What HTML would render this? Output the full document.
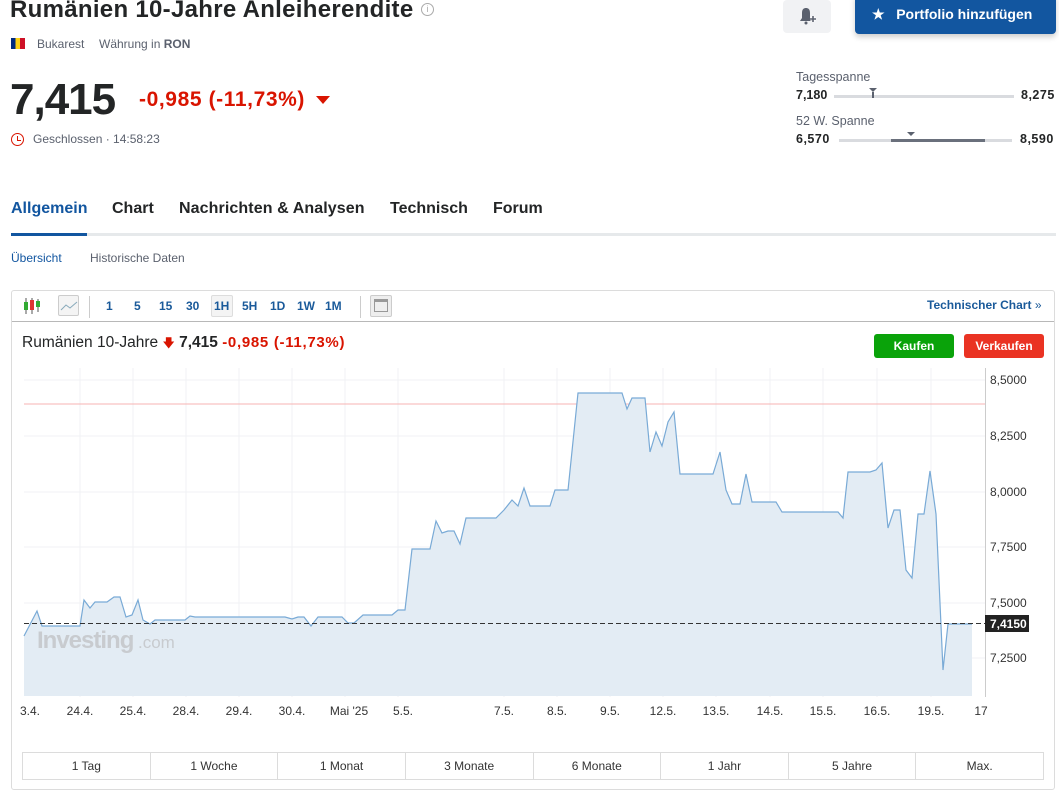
<!DOCTYPE html>
<html><head><meta charset="utf-8"><style>
*{margin:0;padding:0;box-sizing:border-box}
body{width:1059px;height:797px;overflow:hidden;background:#fff;font-family:"Liberation Sans",Arial,sans-serif;color:#232526;position:relative}
.a{position:absolute;white-space:nowrap}
</style></head><body>
<div class="a" style="left:10px;top:-4px;font-size:24px;font-weight:bold;color:#232526;letter-spacing:0.3px">Rumänien 10-Jahre Anleiherendite</div>
<div class="a" style="left:421px;top:3px;width:13px;height:13px;border:1px solid #aaa;border-radius:50%;font-size:9px;color:#aaa;text-align:center;line-height:11px">i</div>
<div class="a" style="left:11px;top:38px;width:14px;height:11px;background:linear-gradient(90deg,#002b7f 33%,#fcd116 33%,#fcd116 66%,#ce1126 66%)"></div>
<div class="a" style="left:37px;top:37px;font-size:12px;color:#5b616e">Bukarest</div>
<div class="a" style="left:99px;top:37px;font-size:12px;color:#5b616e">Währung in <b>RON</b></div>
<div class="a" style="left:10px;top:75px;font-size:44px;font-weight:bold;color:#232526;letter-spacing:-1px">7,415</div>
<div class="a" style="left:139px;top:88px;font-size:21px;font-weight:bold;color:#d91400;letter-spacing:0.6px">-0,985 (-11,73%)</div>
<div class="a" style="left:316px;top:96px;width:0;height:0;border-left:7px solid transparent;border-right:7px solid transparent;border-top:8px solid #d91400"></div>
<div class="a" style="left:11px;top:133px;width:13px;height:13px;border:1.5px solid #d91400;border-radius:50%"></div>
<div class="a" style="left:16.5px;top:136px;width:1.5px;height:4px;background:#d91400"></div>
<div class="a" style="left:16.5px;top:139.5px;width:4px;height:1.5px;background:#d91400"></div>
<div class="a" style="left:33px;top:132px;font-size:12px;color:#5b616e">Geschlossen · 14:58:23</div>

<div class="a" style="left:783px;top:0;width:48px;height:33px;background:#f1f2f4;border-radius:4px"></div>
<svg class="a" style="left:797px;top:5px" width="20" height="20"><path d="M3 16 L5 13 L5 8 C5 4 7 3 9 3 C11 3 13 4 13 8 L13 13 L15 16 Z" fill="#5b616e"/><circle cx="9" cy="18" r="1.5" fill="#5b616e"/><path d="M13 14 H19 M16 11 V17" stroke="#fff" stroke-width="3"/><path d="M13 14 H19 M16 11 V17" stroke="#5b616e" stroke-width="1.6"/></svg>
<div class="a" style="left:855px;top:-6px;width:201px;height:40px;background:#1256a0;border-radius:4px;box-shadow:0 3px 6px rgba(0,0,0,.2);color:#fff;font-weight:bold;font-size:14px;line-height:40px;padding-left:17px">★&nbsp;&nbsp;&nbsp;Portfolio hinzufügen</div>

<div class="a" style="left:796px;top:70px;font-size:12.5px;color:#5b616e">Tagesspanne</div>
<div class="a" style="left:796px;top:88px;font-size:12.5px;font-weight:bold">7,180</div>
<div class="a" style="left:834px;top:95px;width:180px;height:3px;background:#d9dbdf"></div>
<div class="a" style="left:872px;top:92px;width:2px;height:6px;background:#5b616e"></div>
<div class="a" style="left:869px;top:88px;border-left:4px solid transparent;border-right:4px solid transparent;border-top:4px solid #5b616e"></div>
<div class="a" style="left:1021px;top:88px;font-size:12.5px;font-weight:bold;letter-spacing:0.5px">8,275</div>
<div class="a" style="left:796px;top:114px;font-size:12.5px;color:#5b616e">52 W. Spanne</div>
<div class="a" style="left:796px;top:132px;font-size:12.5px;font-weight:bold;letter-spacing:0.5px">6,570</div>
<div class="a" style="left:839px;top:139px;width:173px;height:3px;background:#d9dbdf"></div>
<div class="a" style="left:891px;top:139px;width:94px;height:3px;background:#6a707c"></div>
<div class="a" style="left:907px;top:132px;border-left:4px solid transparent;border-right:4px solid transparent;border-top:4px solid #5b616e"></div>
<div class="a" style="left:1020px;top:132px;font-size:12.5px;font-weight:bold;letter-spacing:0.5px">8,590</div>

<div class="a" style="left:11px;top:200px;font-size:16px;font-weight:bold;color:#1256a0">Allgemein</div>
<div class="a" style="left:112px;top:200px;font-size:16px;font-weight:bold">Chart</div>
<div class="a" style="left:179px;top:200px;font-size:16px;font-weight:bold;letter-spacing:0.1px">Nachrichten &amp; Analysen</div>
<div class="a" style="left:390px;top:200px;font-size:16px;font-weight:bold">Technisch</div>
<div class="a" style="left:493px;top:200px;font-size:16px;font-weight:bold">Forum</div>
<div class="a" style="left:11px;top:233px;width:1045px;height:3px;background:#e6e9eb"></div>
<div class="a" style="left:11px;top:233px;width:76px;height:3px;background:#1256a0"></div>
<div class="a" style="left:11px;top:251px;font-size:12px;color:#1256a0">Übersicht</div>
<div class="a" style="left:90px;top:251px;font-size:12px;color:#5b616e">Historische Daten</div>

<div class="a" style="left:11px;top:290px;width:1044px;height:500px;border:1px solid #dcdcdc;border-radius:3px"></div>
<div class="a" style="left:12px;top:321px;width:1042px;height:1px;background:#b8b8b8"></div>
<svg class="a" style="left:22px;top:296px" width="20" height="20"><line x1="4" y1="2" x2="4" y2="18" stroke="#555"/><rect x="2" y="6" width="4" height="8" fill="#3a3"/><line x1="10" y1="2" x2="10" y2="18" stroke="#555"/><rect x="8" y="4" width="4" height="10" fill="#d33"/><line x1="16" y1="3" x2="16" y2="16" stroke="#555"/><rect x="14" y="5" width="4" height="6" fill="#3a3"/></svg>
<div class="a" style="left:58px;top:295px;width:21px;height:21px;border:1px solid #ccc;border-radius:2px;background:#f4f4f4"></div>
<svg class="a" style="left:60px;top:298px" width="18" height="16"><path d="M1 12 L6 7 L10 10 L17 4" stroke="#8ab" fill="none"/></svg>
<div class="a" style="left:89px;top:296px;width:1px;height:22px;background:#ccc"></div>
<div class="a" style="left:211px;top:295px;width:22px;height:22px;border:1px solid #ddd;border-radius:2px;background:#f4f4f4"></div>
<div class="a" style="left:106px;top:299px;font-size:12px;font-weight:bold;color:#1a5a9a">1</div>
<div class="a" style="left:134px;top:299px;font-size:12px;font-weight:bold;color:#1a5a9a">5</div>
<div class="a" style="left:159px;top:299px;font-size:12px;font-weight:bold;color:#1a5a9a">15</div>
<div class="a" style="left:186px;top:299px;font-size:12px;font-weight:bold;color:#1a5a9a">30</div>
<div class="a" style="left:214px;top:299px;font-size:12px;font-weight:bold;color:#1a5a9a">1H</div>
<div class="a" style="left:242px;top:299px;font-size:12px;font-weight:bold;color:#1a5a9a">5H</div>
<div class="a" style="left:270px;top:299px;font-size:12px;font-weight:bold;color:#1a5a9a">1D</div>
<div class="a" style="left:297px;top:299px;font-size:12px;font-weight:bold;color:#1a5a9a">1W</div>
<div class="a" style="left:325px;top:299px;font-size:12px;font-weight:bold;color:#1a5a9a">1M</div>
<div class="a" style="left:360px;top:296px;width:1px;height:22px;background:#ccc"></div>
<div class="a" style="left:370px;top:295px;width:22px;height:22px;border:1px solid #ccc;border-radius:2px;background:#eee"></div>
<div class="a" style="left:374px;top:299px;width:14px;height:13px;border:1px solid #999;border-top:3px solid #999"></div>
<div class="a" style="left:927px;top:298px;font-size:12px;font-weight:bold;color:#1a5a9a">Technischer Chart <span style="font-weight:normal">»</span></div>

<div class="a" style="left:22px;top:334px;font-size:15.5px;color:#232526">Rumänien 10-Jahre <span style="color:#d91400;font-size:12px">&#129095;</span> <b>7,415</b> <span style="color:#d91400;font-size:15px;letter-spacing:0.7px;font-weight:bold">-0,985 (-11,73%)</span></div>
<div class="a" style="left:874px;top:334px;width:80px;height:24px;background:#0aa30a;border-radius:3px;color:#fff;font-weight:bold;font-size:12px;text-align:center;line-height:24px">Kaufen</div>
<div class="a" style="left:964px;top:334px;width:80px;height:24px;background:#ea3323;border-radius:3px;color:#fff;font-weight:bold;font-size:12px;text-align:center;line-height:24px">Verkaufen</div>

<svg class="a" style="left:0;top:0" width="1059" height="797">
<g stroke="#f0f2f4" stroke-width="1">
<line x1="24" y1="380" x2="985" y2="380"/><line x1="24" y1="436" x2="985" y2="436"/><line x1="24" y1="492" x2="985" y2="492"/><line x1="24" y1="547" x2="985" y2="547"/><line x1="24" y1="603" x2="985" y2="603"/><line x1="24" y1="658" x2="985" y2="658"/>
<line x1="80" y1="368" x2="80" y2="697"/><line x1="133" y1="368" x2="133" y2="697"/><line x1="186" y1="368" x2="186" y2="697"/><line x1="239" y1="368" x2="239" y2="697"/><line x1="292" y1="368" x2="292" y2="697"/><line x1="345" y1="368" x2="345" y2="697"/><line x1="398" y1="368" x2="398" y2="697"/><line x1="504" y1="368" x2="504" y2="697"/><line x1="557" y1="368" x2="557" y2="697"/><line x1="610" y1="368" x2="610" y2="697"/><line x1="663" y1="368" x2="663" y2="697"/><line x1="716" y1="368" x2="716" y2="697"/><line x1="770" y1="368" x2="770" y2="697"/><line x1="823" y1="368" x2="823" y2="697"/><line x1="877" y1="368" x2="877" y2="697"/><line x1="931" y1="368" x2="931" y2="697"/>
</g>
<line x1="985.5" y1="368" x2="985.5" y2="697" stroke="#ccc"/>
<line x1="24" y1="404" x2="985" y2="404" stroke="#f7b3b3"/>
<path d="M24,696 L24,636 L37,611 L42,626 L80,626 L84,600 L90,608 L95,602 L107,602 L114,597 L120,597 L126,617 L132,615 L138,600 L143,620 L150,624 L155,620 L185,620 L190,616 L195,617 L285,617 L292,619 L298,617 L304,617 L311,626 L318,617 L342,617 L348,623 L354,623 L363,615 L392,615 L398,610 L405,610 L412,549 L430,549 L436,521 L442,533 L448,531 L454,531 L460,544 L466,518 L496,518 L504,510 L512,500 L518,506 L524,488 L530,506 L550,506 L555,490 L568,490 L578,393 L622,393 L627,409 L632,398 L645,398 L650,452 L656,432 L662,446 L668,422 L674,412 L680,474 L713,474 L720,452 L726,490 L732,504 L740,504 L746,474 L752,502 L776,502 L782,512 L838,512 L843,518 L848,472 L870,472 L876,470 L882,463 L888,528 L894,510 L900,510 L906,570 L912,578 L918,514 L924,514 L930,471 L936,514 L943,670 L948,624 L972,624 L972,696 Z" fill="#e3ecf4" stroke="none"/>
<path d="M24,636 L37,611 L42,626 L80,626 L84,600 L90,608 L95,602 L107,602 L114,597 L120,597 L126,617 L132,615 L138,600 L143,620 L150,624 L155,620 L185,620 L190,616 L195,617 L285,617 L292,619 L298,617 L304,617 L311,626 L318,617 L342,617 L348,623 L354,623 L363,615 L392,615 L398,610 L405,610 L412,549 L430,549 L436,521 L442,533 L448,531 L454,531 L460,544 L466,518 L496,518 L504,510 L512,500 L518,506 L524,488 L530,506 L550,506 L555,490 L568,490 L578,393 L622,393 L627,409 L632,398 L645,398 L650,452 L656,432 L662,446 L668,422 L674,412 L680,474 L713,474 L720,452 L726,490 L732,504 L740,504 L746,474 L752,502 L776,502 L782,512 L838,512 L843,518 L848,472 L870,472 L876,470 L882,463 L888,528 L894,510 L900,510 L906,570 L912,578 L918,514 L924,514 L930,471 L936,514 L943,670 L948,624 L972,624" fill="none" stroke="#79aad6" stroke-width="1.2"/>
<line x1="24" y1="623.5" x2="985" y2="623.5" stroke="#333" stroke-dasharray="5,3"/>
<text x="37" y="648" font-family="Liberation Sans" font-weight="bold" font-size="24" fill="#c8cbcf" letter-spacing="-1">Investing</text><text x="138" y="648" font-family="Liberation Sans" font-size="17" fill="#c8cbcf">.com</text>
<g font-family="Liberation Sans" font-size="12" fill="#333">
<text x="990" y="384">8,5000</text><text x="990" y="440">8,2500</text><text x="990" y="496">8,0000</text><text x="990" y="551">7,7500</text><text x="990" y="607">7,5000</text><text x="990" y="662">7,2500</text>
</g>
<rect x="985" y="615" width="44" height="17" fill="#222"/>
<text x="990" y="628" font-family="Liberation Sans" font-size="12" font-weight="bold" fill="#fff">7,4150</text>
<g font-family="Liberation Sans" font-size="12" fill="#333" text-anchor="middle">
<text x="30" y="715">3.4.</text><text x="80" y="715">24.4.</text><text x="133" y="715">25.4.</text><text x="186" y="715">28.4.</text><text x="239" y="715">29.4.</text><text x="292" y="715">30.4.</text><text x="349" y="715">Mai '25</text><text x="403" y="715">5.5.</text><text x="504" y="715">7.5.</text><text x="557" y="715">8.5.</text><text x="610" y="715">9.5.</text><text x="663" y="715">12.5.</text><text x="716" y="715">13.5.</text><text x="770" y="715">14.5.</text><text x="823" y="715">15.5.</text><text x="877" y="715">16.5.</text><text x="931" y="715">19.5.</text><text x="981" y="715">17</text>
</g>
</svg>

<div class="a" style="left:22px;top:752px;width:1022px;height:28px;border:1px solid #dcdcdc;display:flex;font-size:12px;color:#333">
<div style="flex:1;text-align:center;line-height:26px;border-right:1px solid #dcdcdc">1 Tag</div>
<div style="flex:1;text-align:center;line-height:26px;border-right:1px solid #dcdcdc">1 Woche</div>
<div style="flex:1;text-align:center;line-height:26px;border-right:1px solid #dcdcdc">1 Monat</div>
<div style="flex:1;text-align:center;line-height:26px;border-right:1px solid #dcdcdc">3 Monate</div>
<div style="flex:1;text-align:center;line-height:26px;border-right:1px solid #dcdcdc">6 Monate</div>
<div style="flex:1;text-align:center;line-height:26px;border-right:1px solid #dcdcdc">1 Jahr</div>
<div style="flex:1;text-align:center;line-height:26px;border-right:1px solid #dcdcdc">5 Jahre</div>
<div style="flex:1;text-align:center;line-height:26px">Max.</div>
</div>
</body></html>
